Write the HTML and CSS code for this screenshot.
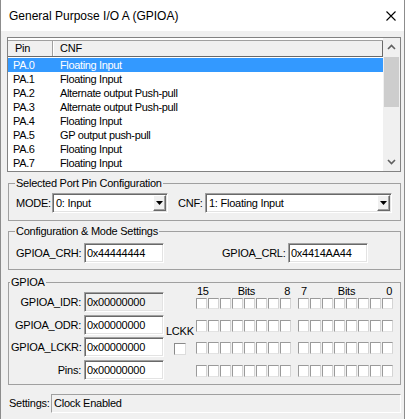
FILE: index.html
```html
<!DOCTYPE html>
<html>
<head>
<meta charset="utf-8">
<link rel="stylesheet" href="styles.css">
</head>
<body>
<div class="window">
  <div class="titlebar">
    <span class="title">General Purpose I/O A (GPIOA)</span>
    <svg class="close" width="10" height="10" viewBox="0 0 10 10"><path d="M0.5 0.5L9.5 9.5M9.5 0.5L0.5 9.5" stroke="#000" stroke-width="1.1" fill="none"/></svg>
  </div>
  <div class="body">
    <div class="listbox">
      <div class="lv">
        <div class="lv-head"><div class="col-pin">Pin</div><div class="col-cnf">CNF</div></div>
        <div class="lv-row sel"><span class="c-pin">PA.0</span><span>Floating Input</span></div>
        <div class="lv-row"><span class="c-pin">PA.1</span><span>Floating Input</span></div>
        <div class="lv-row"><span class="c-pin">PA.2</span><span>Alternate output Push-pull</span></div>
        <div class="lv-row"><span class="c-pin">PA.3</span><span>Alternate output Push-pull</span></div>
        <div class="lv-row"><span class="c-pin">PA.4</span><span>Floating Input</span></div>
        <div class="lv-row"><span class="c-pin">PA.5</span><span>GP output push-pull</span></div>
        <div class="lv-row"><span class="c-pin">PA.6</span><span>Floating Input</span></div>
        <div class="lv-row"><span class="c-pin">PA.7</span><span>Floating Input</span></div>
      </div>
      <div class="sb">
        <div class="sb-btn"><svg width="9" height="6" viewBox="0 0 9 6"><path d="M1 5L4.5 1.5L8 5" stroke="#606060" stroke-width="1.6" fill="none"/></svg></div>
        <div class="sb-thumb"></div>
        <div class="sb-track"></div>
        <div class="sb-btn"><svg width="9" height="6" viewBox="0 0 9 6"><path d="M1 1L4.5 4.5L8 1" stroke="#606060" stroke-width="1.6" fill="none"/></svg></div>
      </div>
    </div>

    <fieldset class="grp g1">
      <legend>Selected Port Pin Configuration</legend>
      <div class="row1">
        <span class="lbl-mode">MODE:</span>
        <div class="combo combo-mode"><span class="combo-text">0: Input</span><span class="combo-btn"><svg width="7" height="4" viewBox="0 0 7 4"><path d="M0 0H7L3.5 4Z" fill="#000"/></svg></span></div>
        <span class="lbl-cnf">CNF:</span>
        <div class="combo combo-cnf"><span class="combo-text">1: Floating Input</span><span class="combo-btn"><svg width="7" height="4" viewBox="0 0 7 4"><path d="M0 0H7L3.5 4Z" fill="#000"/></svg></span></div>
      </div>
    </fieldset>

    <fieldset class="grp g2">
      <legend>Configuration &amp; Mode Settings</legend>
      <div class="row2">
        <span class="lbl-crh">GPIOA_CRH:</span>
        <div class="edit">0x44444444</div>
        <span class="lbl-crl">GPIOA_CRL:</span>
        <div class="edit">0x4414AA44</div>
      </div>
    </fieldset>

    <fieldset class="grp g3">
      <legend>GPIOA</legend>
      <div class="row3">
        <div class="regs">
          <span class="rlbl">GPIOA_IDR:</span><div class="edit ro">0x00000000</div>
          <span class="rlbl">GPIOA_ODR:</span><div class="edit">0x00000000</div>
          <span class="rlbl">GPIOA_LCKR:</span><div class="edit">0x00000000</div>
          <span class="rlbl">Pins:</span><div class="edit">0x00000000</div>
        </div>
        <div class="lckk">
          <span class="lckk-lbl">LCKK</span>
          <span class="chk"></span>
        </div>
        <div class="bits">
          <div class="bits-head">
            <div class="bh bh-hi"><span>15</span><span>Bits</span><span>8</span></div>
            <div class="bh bh-lo"><span>7</span><span>Bits</span><span>0</span></div>
          </div>
          <div class="brow brow-first"><div class="bgrp"><i></i><i></i><i></i><i></i><i></i><i></i><i></i><i></i></div><div class="bgrp"><i></i><i></i><i></i><i></i><i></i><i></i><i></i><i></i></div></div>
          <div class="brow"><div class="bgrp"><i></i><i></i><i></i><i></i><i></i><i></i><i></i><i></i></div><div class="bgrp"><i></i><i></i><i></i><i></i><i></i><i></i><i></i><i></i></div></div>
          <div class="brow brow-3"><div class="bgrp"><i></i><i></i><i></i><i></i><i></i><i></i><i></i><i></i></div><div class="bgrp"><i></i><i></i><i></i><i></i><i></i><i></i><i></i><i></i></div></div>
          <div class="brow brow-last"><div class="bgrp"><i></i><i></i><i></i><i></i><i></i><i></i><i></i><i></i></div><div class="bgrp"><i></i><i></i><i></i><i></i><i></i><i></i><i></i><i></i></div></div>
        </div>
      </div>
    </fieldset>

    <div class="status">
      <span class="status-lbl">Settings:</span>
      <div class="status-box">Clock Enabled</div>
    </div>
  </div>
</div>
</body>
</html>
```

FILE: styles.css
```css
* { box-sizing: border-box; }
body {
  margin: 0;
  background: #fff;
  font-family: "Liberation Sans", Arial, sans-serif;
  font-size: 11px;
  letter-spacing: -0.25px;
  color: #000;
}
.window {
  width: 405px;
  height: 419px;
  border-left: 1px solid #8c8c8c;
  border-right: 1px solid #8c8c8c;
  background: #f0f0f0;
  overflow: hidden;
}
.titlebar {
  height: 31px;
  background: #fff;
  display: flex;
  align-items: center;
  padding-left: 8px;
  padding-right: 8px;
}
.title { font-size: 12px; letter-spacing: 0; }
.close { margin-left: auto; }

.body { padding: 6px 0 0 6px; }

/* list view */
.listbox {
  width: 394px;
  height: 135px;
  border: 1px solid #828282;
  display: flex;
  background: #fff;
}
.lv { flex: 1; padding-top: 2px; }
.lv-head {
  display: flex;
  height: 17px;
  border-top: 1px solid #a0a0a0;
  border-bottom: 1px solid #696969;
  background: #f0f0f0;
  line-height: 15px;
  margin-bottom: 1px;
}
.col-pin {
  width: 45px;
  padding-left: 7px;
  border-right: 1px solid #a0a0a0;
}
.col-cnf {
  flex: 1;
  padding-left: 6px;
  border-left: 1px solid #fff;
  border-right: 1px solid #696969;
}
.lv-row {
  display: flex;
  height: 14px;
  line-height: 14px;
  white-space: nowrap;
  letter-spacing: -0.35px;
}
.lv-row.sel { background: #3399ff; color: #fff; }
.c-pin { width: 52px; padding-left: 5px; }

.sb {
  width: 17px;
  background: #f0f0f0;
  display: flex;
  flex-direction: column;
}
.sb-btn {
  height: 18px;
  display: flex;
  align-items: center;
  justify-content: center;
}
.sb-thumb {
  height: 50px;
  margin: 1px 1px 0 1px;
  background: #cdcdcd;
}
.sb-track { flex: 1; }

/* group boxes */
.grp {
  margin: 0 0 0 1px;
  width: 393px;
  border: 1px solid #a0a0a0;
  padding: 0 6px 7px 7px;
  min-width: 0;
}
.grp legend {
  padding: 0 1px;
  margin-left: -1px;
  line-height: 14px;
}
.g1 { margin-top: 4px; padding-top: 3px; padding-bottom: 7px; }
.g2 { margin-top: 3px; padding-top: 5px; padding-bottom: 6px; }
.g3 { margin-top: 5px; padding-top: 3px; padding-bottom: 4px; padding-left: 2px; }

.row1, .row2 {
  display: flex;
  align-items: center;
}
.lbl-mode { width: 36px; }
.lbl-cnf { width: 27px; margin-left: 10px; }

.combo {
  height: 20px;
  background: #fff;
  border: 1px solid;
  border-color: #a0a0a0 #fff #fff #a0a0a0;
  box-shadow: inset 1px 1px 0 #696969, inset -1px -1px 0 #e3e3e3;
  display: flex;
  align-items: center;
  padding: 2px 2px 2px 3px;
}
.combo-mode { width: 116px; }
.combo-cnf { width: 187px; }
.combo-text { flex: 1; white-space: nowrap; }
.combo-btn {
  width: 13px;
  height: 16px;
  background: #f0f0f0;
  border: 1px solid;
  border-color: #fff #696969 #696969 #fff;
  box-shadow: inset -1px -1px 0 #a0a0a0;
  display: flex;
  align-items: center;
  justify-content: center;
  margin-right: -1px;
}

.edit {
  width: 80px;
  height: 20px;
  line-height: 16px;
  background: #fff;
  border: 1px solid;
  border-color: #a0a0a0 #fff #fff #a0a0a0;
  box-shadow: inset 1px 1px 0 #696969, inset -1px -1px 0 #e3e3e3;
  padding: 1px 2px;
  white-space: nowrap;
}
.edit.ro { background: #f0f0f0; }
.lbl-crh { width: 68px; white-space: nowrap; }
.lbl-crl { width: 66px; margin-left: 58px; white-space: nowrap; }

/* GPIOA group */
.row3 { display: flex; align-items: flex-start; }
.regs {
  display: grid;
  grid-template-columns: 70px 80px;
  grid-auto-rows: 20px;
  column-gap: 3px;
  row-gap: 2.67px;
  align-items: center;
}
.rlbl { text-align: right; white-space: nowrap; }
.lckk {
  width: 32px;
  padding-left: 2px;
  padding-top: 33px;
  display: flex;
  flex-direction: column;
  align-items: flex-start;
}
.lckk-lbl { line-height: 13px; }
.chk {
  width: 12px;
  height: 12px;
  margin: 5px 0 0 8px;
  background: #fff;
  border: 1px solid;
  border-color: #8a8a8a #dcdcdc #dcdcdc #8a8a8a;
}
.bits { margin-top: -7px; }
.bits-head { display: flex; gap: 6px; height: 13px; line-height: 12px; }
.bh {
  width: 96px;
  display: flex;
  justify-content: space-between;
}
.bh-hi { padding: 0 2px 0 1px; }
.bh-lo { padding: 0 2px 0 3px; }
.brow { display: flex; gap: 6px; height: 22px; }
.brow-3 { height: 23px; }
.brow-last { height: 12px; }
.bgrp { display: flex; }
.bgrp i {
  display: block;
  width: 11px;
  height: 12px;
  margin-right: 1px;
  background: #fff;
  border: 1px solid;
  border-color: #9a9a9a #d4d4d4 #e3e3e3 #9a9a9a;
}
.brow-first .bgrp i { height: 11px; }

/* status */
.status {
  margin-top: 9px;
  display: flex;
  align-items: center;
  padding-left: 2px;
}
.status-lbl { width: 42px; white-space: nowrap; }
.status-box {
  width: 350px;
  height: 19px;
  line-height: 17px;
  border: 1px solid;
  border-color: #a0a0a0 #fff #fff #a0a0a0;
  padding-left: 2px;
  background: #f0f0f0;
}
```
